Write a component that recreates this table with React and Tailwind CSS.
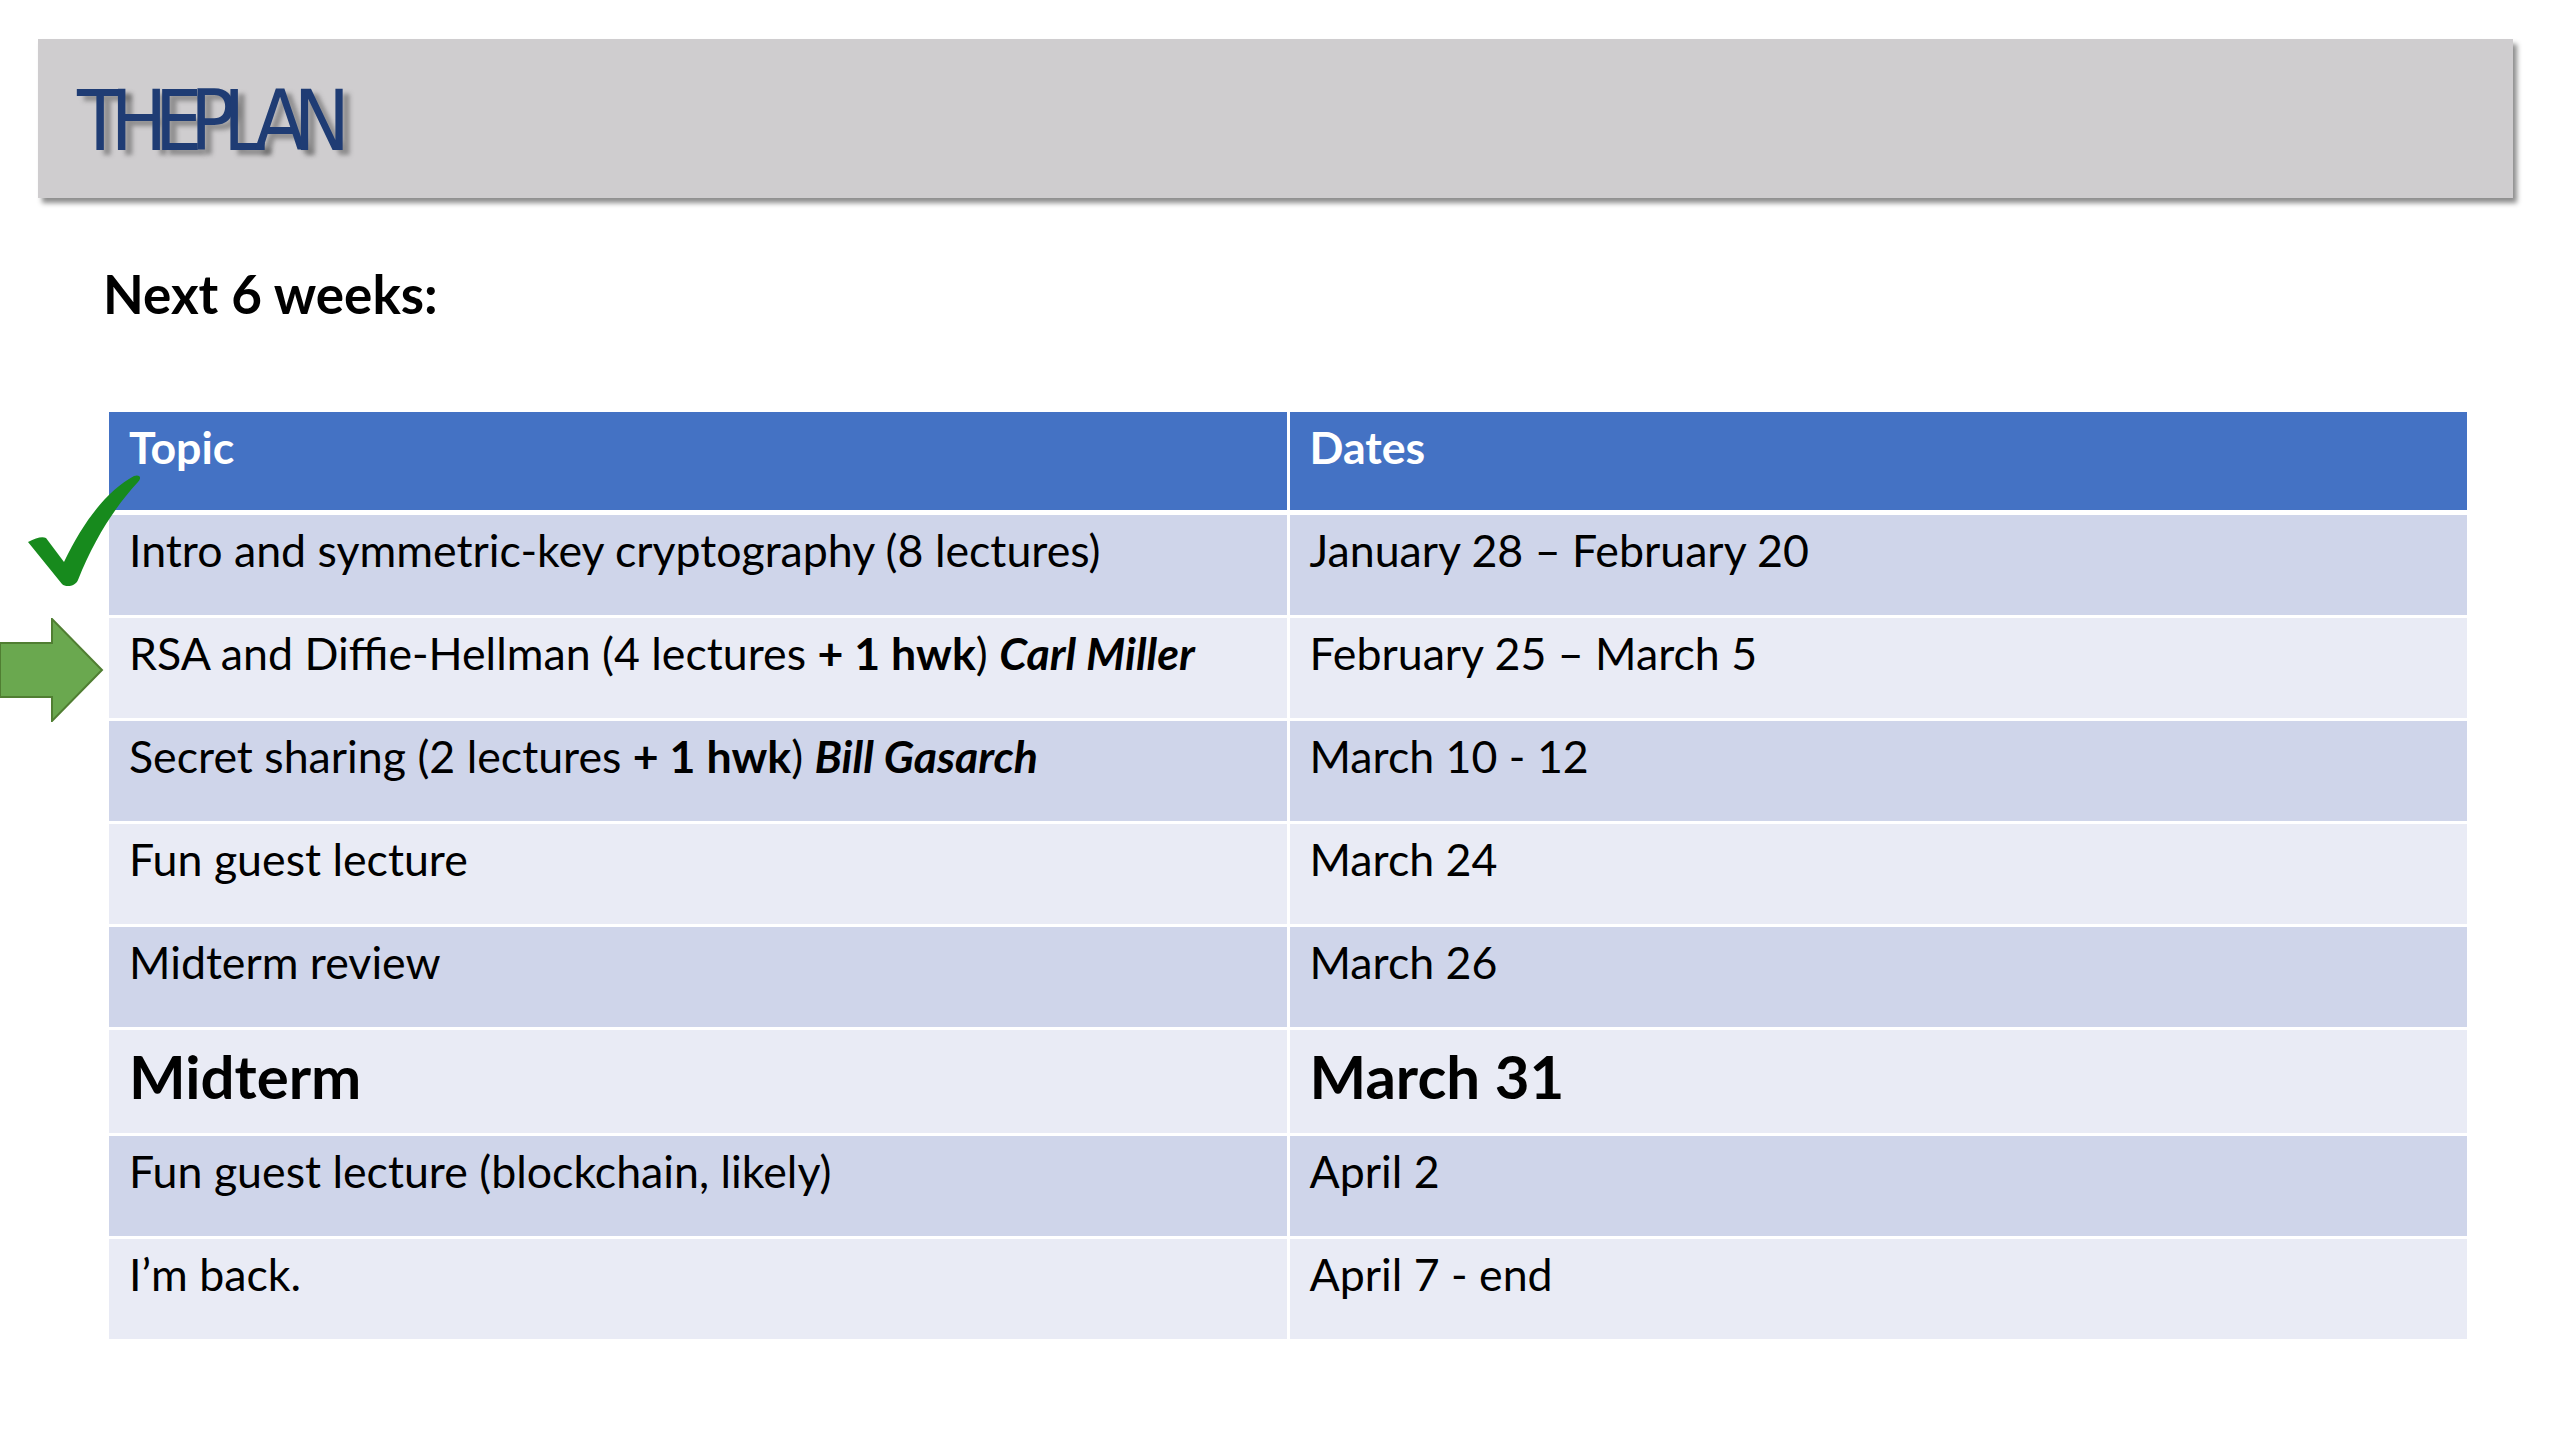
import React from 'react';

const rows = [
  { topic: 'Intro and symmetric-key cryptography (8 lectures)', date: 'January 28 – February 20' },
  {
    topic: (
      <>
        RSA and Diffie-Hellman (4 lectures <b>+ 1 hwk</b>) <b><i>Carl Miller</i></b>
      </>
    ),
    date: 'February 25 – March 5',
  },
  {
    topic: (
      <>
        Secret sharing (2 lectures <b>+ 1 hwk</b>) <b><i>Bill Gasarch</i></b>
      </>
    ),
    date: 'March 10 - 12',
  },
  { topic: 'Fun guest lecture', date: 'March 24' },
  { topic: 'Midterm review', date: 'March 26' },
  { topic: 'Midterm', date: 'March 31', big: true },
  { topic: 'Fun guest lecture (blockchain, likely)', date: 'April 2' },
  { topic: 'I’m back.', date: 'April 7 - end' },
];

export default function App() {
  return (
    <div className="w-[2560px] h-[1440px] bg-white overflow-hidden flex flex-col" style={{ fontFamily: 'Lato, "Open Sans", sans-serif' }}>
      {/* Title bar */}
      <div className="ml-[38px] mt-[39px] w-[2475px] h-[159px] bg-[#cfcdcf] shadow-[4px_5px_5px_rgba(0,0,0,0.45)] flex items-center pl-[39px]">
        <h1
          className="text-[84px] leading-none text-[#1f3c74] tracking-[-0.15em] [text-shadow:7px_5px_4px_rgba(90,90,90,0.55)] mt-[4px]"
          style={{ fontFamily: '"Liberation Sans Narrow", "DejaVu Sans Condensed", "Liberation Sans", sans-serif' }}
        >
          THEPLAN
        </h1>
      </div>

      {/* Subtitle */}
      <div className="ml-[103px] mt-[69px] text-[53px] font-bold leading-none text-black">Next 6 weeks:</div>

      {/* Table */}
      <div className="relative ml-[109px] mt-[92px] w-[2358px] text-[44.7px] leading-[1.2] text-black">
        {/* check mark */}
        <svg className="absolute left-[-81px] top-[62px] w-[112px] h-[114px]" viewBox="0 0 112 114">
          <path
            d="M0 68 C8 64 14 62 18 64 L36 88 C56 46 80 16 106 2 C112 0 114 4 110 8 C86 34 66 66 50 106 C48 112 38 114 34 110 Z"
            fill="#178a1d"
          />
        </svg>
        {/* arrow */}
        <svg className="absolute left-[-109px] top-[206px] w-[104px] h-[104px]" viewBox="0 0 104 104">
          <path d="M0 25 H52 V1 L102 52 L52 103 V79 H0 Z" fill="#6aa84f" stroke="#507e32" strokeWidth="2" />
        </svg>

        <div className="grid grid-cols-2 gap-x-[3px] bg-white">
          <div className="h-[98px] bg-[#4472c4] px-[20px] pt-[9px] font-bold text-white">Topic</div>
          <div className="h-[98px] bg-[#4472c4] px-[20px] pt-[9px] font-bold text-white">Dates</div>
        </div>
        <div className="mt-[5px] flex flex-col gap-y-[3px]">
          {rows.map((r, i) => (
            <div key={i} className="grid grid-cols-2 gap-x-[3px]">
              <div
                className={`${i % 2 === 0 ? 'bg-[#cfd5ea]' : 'bg-[#e9ebf5]'} ${r.big ? 'h-[103px] text-[60px] font-bold pt-[10px]' : 'h-[100px] pt-[9px]'} px-[20px]`}
              >
                {r.topic}
              </div>
              <div
                className={`${i % 2 === 0 ? 'bg-[#cfd5ea]' : 'bg-[#e9ebf5]'} ${r.big ? 'h-[103px] text-[60px] font-bold pt-[10px]' : 'h-[100px] pt-[9px]'} px-[20px]`}
              >
                {r.date}
              </div>
            </div>
          ))}
        </div>
      </div>
    </div>
  );
}
